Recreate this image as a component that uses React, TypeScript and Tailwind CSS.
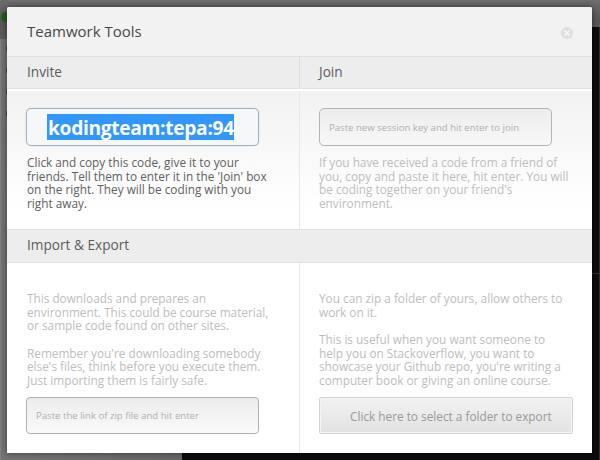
import type { ReactNode } from "react";

function SectionHeader({ children, className = "" }: { children?: ReactNode; className?: string }) {
  return (
    <h2 className={`flex-1 bg-[#ededed] pl-5 text-[13.65px] leading-[30px] text-[#5c5c5c] ${className}`}>
      {children}
    </h2>
  );
}

function Copy({ lines, className = "" }: { lines: string[]; className?: string }) {
  return (
    <p className={`whitespace-pre text-[11.8px] leading-[13.65px] ${className}`}>{lines.join("\n")}</p>
  );
}

function Backdrop() {
  return (
    <div className="flex h-full flex-col">
      <div className="h-[39px] shrink-0 bg-gradient-to-b from-[#6e6e6e] via-[#575757] to-[#5c5c5c] pt-[12px] pl-px">
        <div className="size-[10px] rounded-full bg-[#1f6017]" />
      </div>
      <div className="flex min-h-0 flex-1">
        <div className="flex w-[182px] flex-col gap-[16.5px] border-l border-[#808080] bg-gradient-to-r from-[#747474] to-[#666666] pt-[7px] pl-[5px]">
          <i className="h-[5px] w-[3px] bg-[#444]" />
          <i className="h-[5px] w-[3px] bg-[#444]" />
          <i className="h-[5px] w-[3px] bg-[#444]" />
          <i className="h-[5px] w-[3px] bg-[#444]" />
        </div>
        <div className="-mt-[12px] flex flex-1 flex-col border-r border-[#303030] bg-[#0c0c0c]">
          <div className="h-[247px] border-b border-[#303030]" />
        </div>
      </div>
    </div>
  );
}

export default function App() {
  return (
    <div className="relative h-[460px] w-[600px] overflow-hidden bg-[#6b6b6b] font-['Open_Sans',sans-serif]">
      <Backdrop />
      <div className="absolute top-[7px] left-[7px] flex h-[446px] w-[585px] flex-col rounded-t-[2px] bg-white shadow-[0_0_6px_rgba(0,0,0,0.5)]">
        <header className="flex h-[50px] shrink-0 items-center justify-between rounded-t-[2px] border-b border-[#dfdfdf] bg-[#f2f2f2] pr-[19px] pl-5">
          <h1 className="text-[15px] text-[#484848]">Teamwork Tools</h1>
          <svg viewBox="0 0 12 12" className="mt-[2px] size-3">
            <circle cx="6" cy="6" r="6" fill="#dedede" />
            <path d="M3.5 3.5 8.5 8.5M8.5 3.5 3.5 8.5" stroke="#f7f7f7" strokeWidth="1.7" />
          </svg>
        </header>

        <div className="flex h-8 shrink-0 border-b border-[#e0e0e0]">
          <SectionHeader className="max-w-[293px] min-w-[293px] border-r border-[#dddddd]">Invite</SectionHeader>
          <SectionHeader className="!pl-[19px]">Join</SectionHeader>
        </div>

        <div className="flex h-[140px] shrink-0 pt-[2px]">
          <section className="w-[293px] border-r border-[#e8e8e8] bg-gradient-to-b from-[#f2f2f2] to-white to-85% pt-[17px] pl-[19px]">
            <div className="h-[38px] w-[233px] rounded-[5px] border border-[#a4b1bb] bg-[#f6f7f8] pt-[5px] pl-5 shadow-[0_0_2px_#cbdbe6]">
              <span className="block h-[26px] w-[187px] bg-[#3297fd] pl-px text-[19.2px] leading-[28px] font-bold tracking-[-0.32px] whitespace-nowrap text-white">
                kodingteam:tepa:94
              </span>
            </div>
            <Copy
              className="mt-[10px] ml-px text-[#606060]"
              lines={[
                "Click and copy this code, give it to your",
                "friends. Tell them to enter it in the 'Join' box",
                "on the right. They will be coding with you",
                "right away.",
              ]}
            />
          </section>
          <section className="flex-1 bg-gradient-to-b from-[#f2f2f2] to-white to-85% pt-[17px] pl-[19px]">
            <div className="h-[38px] w-[233px] rounded-[5px] border border-[#b4b4b4] bg-gradient-to-b from-[#ececec] to-[#f8f8f8] pl-[9px] text-[9.6px] leading-[38px] whitespace-nowrap text-[#b0b0b0]">
              Paste new session key and hit enter to join
            </div>
            <Copy
              className="mt-[10px] text-[#bdbdbd]"
              lines={[
                "If you have received a code from a friend of",
                "you, copy and paste it here, hit enter. You will",
                "be coding together on your friend's",
                "environment.",
              ]}
            />
          </section>
        </div>

        <div className="flex h-[34px] shrink-0 border-y border-[#e2e2e2]">
          <SectionHeader>Import &amp; Export</SectionHeader>
        </div>

        <div className="flex min-h-0 flex-1">
          <section className="w-[293px] border-r border-[#e8e8e8] pt-[29px] pl-[19px]">
            <Copy
              className="ml-px text-[#bdbdbd]"
              lines={[
                "This downloads and prepares an",
                "environment. This could be course material,",
                "or sample code found on other sites.",
                "",
                "Remember you're downloading somebody",
                "else's files, think before you execute them.",
                "Just importing them is fairly safe.",
              ]}
            />
            <div className="mt-[9px] h-[37px] w-[233px] rounded-[4px] border border-[#b0b0b0] bg-gradient-to-b from-[#ececec] to-[#fafafa] pl-[9px] text-[9.6px] leading-[36px] whitespace-nowrap text-[#b0b0b0]">
              Paste the link of zip file and hit enter
            </div>
          </section>
          <section className="flex-1 pt-[29px] pl-[19px]">
            <Copy
              className="text-[#bdbdbd]"
              lines={[
                "You can zip a folder of yours, allow others to",
                "work on it.",
                "",
                "This is useful when you want someone to",
                "help you on Stackoverflow, you want to",
                "showcase your Github repo, you're writing a",
                "computer book or giving an online course.",
              ]}
            />
            <button className="mt-[9px] block h-[37px] w-[254px] rounded-[2px] border border-[#d3d3d3] bg-gradient-to-b from-[#f2f2f2] to-[#e2e2e2] pl-[30px] text-left text-[11.8px] leading-[36px] whitespace-nowrap text-[#999999] shadow-[inset_0_0_0_1px_#f4f4f4]">
              Click here to select a folder to export
            </button>
          </section>
        </div>
      </div>
    </div>
  );
}
